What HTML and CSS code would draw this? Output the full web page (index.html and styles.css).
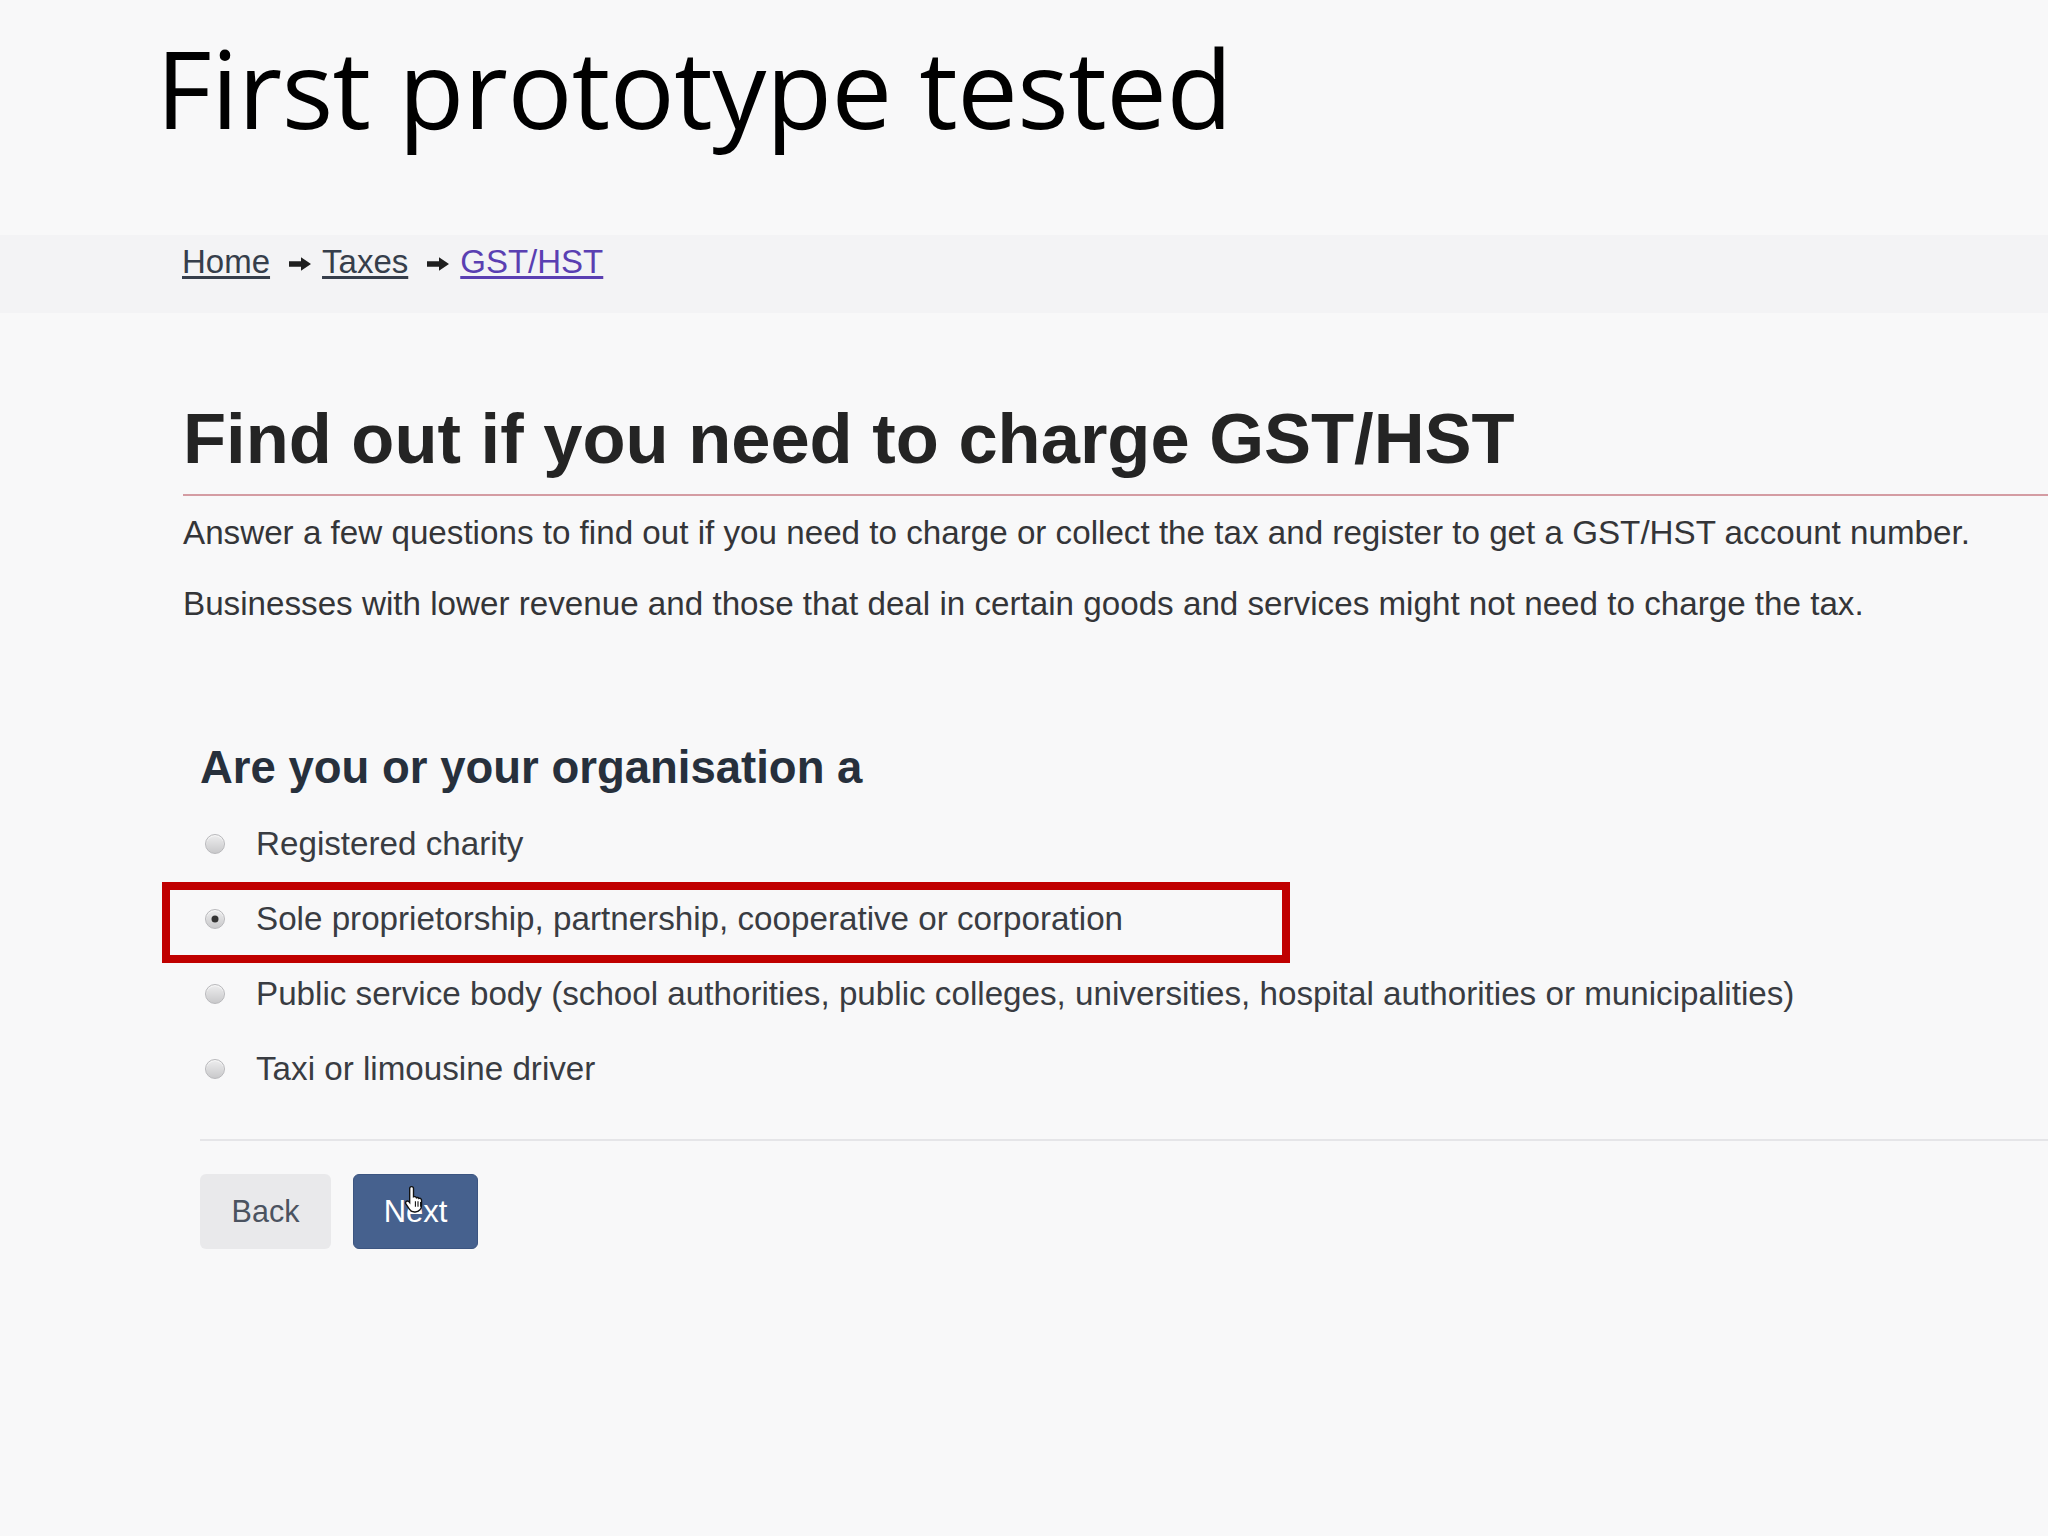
FILE: index.html
```html
<!DOCTYPE html>
<html lang="en">
<head>
<meta charset="utf-8">
<title>First prototype tested</title>
<link rel="stylesheet" href="styles.css">
</head>
<body>
<div class="slide">
  <h1 class="slide-title">First prototype tested</h1>

  <nav class="breadcrumb">
    <a class="crumb" href="#">Home</a>
    <span class="sep"><svg viewBox="0 0 24 16" width="24" height="16"><path d="M1 5.3h12V1.2l10 6.8-10 6.8V10.7H1z" fill="#1f1f1f"/></svg></span>
    <a class="crumb" href="#">Taxes</a>
    <span class="sep"><svg viewBox="0 0 24 16" width="24" height="16"><path d="M1 5.3h12V1.2l10 6.8-10 6.8V10.7H1z" fill="#1f1f1f"/></svg></span>
    <a class="crumb visited" href="#">GST/HST</a>
  </nav>

  <main class="content">
    <h2 class="page-title">Find out if you need to charge GST/HST</h2>
    <p class="lead">Answer a few questions to find out if you need to charge or collect the tax and register to get a GST/HST account number.</p>
    <p class="lead second">Businesses with lower revenue and those that deal in certain goods and services might not need to charge the tax.</p>

    <section class="question">
      <h3 class="q-title">Are you or your organisation a</h3>
      <div class="options">
        <label class="option"><span class="radio"></span><span class="opt-text">Registered charity</span></label>
        <label class="option selected"><span class="radio"></span><span class="opt-text">Sole proprietorship, partnership, cooperative or corporation</span><span class="highlight"></span></label>
        <label class="option"><span class="radio"></span><span class="opt-text">Public service body (school authorities, public colleges, universities, hospital authorities or municipalities)</span></label>
        <label class="option"><span class="radio"></span><span class="opt-text">Taxi or limousine driver</span></label>
      </div>
      <div class="actions">
        <button class="btn btn-back" type="button">Back</button>
        <button class="btn btn-next" type="button">Next<svg class="cursor" viewBox="0 0 16 22" width="22" height="30"><path d="M5.5 1.2c.8 0 1.4.6 1.4 1.4v6.1l.3-.1c.6-.3 1.4 0 1.7.6l.1.2c.5-.4 1.3-.3 1.7.3l.1.2c.5-.3 1.2-.2 1.6.3.3.3.4.7.4 1.1V15c0 2.6-2 4.8-4.6 4.8H7.6c-1.5 0-2.8-.7-3.600-1.9L1.3 13.8c-.4-.6-.2-1.4.4-1.8.6-.4 1.3-.3 1.8.2l.6.7V2.6c0-.8.6-1.4 1.4-1.4z" fill="#fff" stroke="#111" stroke-width="1"/><path d="M8.3 12v4M10.2 12v4M12.1 12.4v3.6" stroke="#111" stroke-width=".8"/></svg></button>
      </div>
    </section>
  </main>
</div>
</body>
</html>
```

FILE: styles.css
```css
html, body {
  margin: 0;
  padding: 0;
}

body {
  width: 2048px;
  height: 1536px;
  overflow: hidden;
  background: #f8f8f9;
  font-family: "Liberation Sans", Arial, Helvetica, sans-serif;
  color: #36373a;
}

.slide {
  width: 2048px;
  height: 1536px;
  overflow: hidden;
}

.slide-title {
  margin: 0;
  padding: 34px 0 0 156px;
  font-family: "Open Sans", "Noto Sans", sans-serif;
  font-weight: 400;
  font-size: 108px;
  line-height: 108px;
  letter-spacing: -0.5px;
  color: #000;
}

.breadcrumb {
  margin-top: 93px;
  height: 78px;
  box-sizing: border-box;
  padding: 7px 0 0 182px;
  background: #f3f3f5;
  font-size: 33px;
  line-height: 40px;
  display: flex;
  align-items: flex-start;
}

.crumb {
  color: #363e4b;
  text-decoration: underline;
  text-decoration-thickness: 3px;
  text-underline-offset: 3px;
}

.crumb.visited {
  color: #5a3fb2;
}

.sep {
  display: inline-flex;
  align-items: center;
  height: 40px;
  margin: 2px 10px 0 18px;
}

.content {
  padding-left: 183px;
}

.page-title {
  margin: 84px 0 0;
  padding: 0 0 13px 0;
  font-size: 70.5px;
  line-height: 84px;
  font-weight: 700;
  color: #242424;
  border-bottom: 2px solid #d49ca3;
}

.lead {
  margin: 17px 0 0;
  font-size: 33.2px;
  line-height: 40px;
  color: #343538;
}

.lead.second {
  margin-top: 31px;
}

.question {
  margin-left: 17px;
}

.q-title {
  margin: 117px 0 0;
  font-size: 45.5px;
  line-height: 54px;
  font-weight: 700;
  color: #27303c;
}

.options {
  margin-top: 11px;
}

.option {
  position: relative;
  display: flex;
  align-items: center;
  height: 75px;
  font-size: 33.2px;
  color: #393c42;
}

.radio {
  position: relative;
  flex: none;
  width: 20px;
  height: 20px;
  margin-left: 5px;
  box-sizing: border-box;
  border-radius: 50%;
  border: 1px solid #b9b9bc;
  background: linear-gradient(#ededee, #c9c9cb);
  box-shadow: inset 0 1px 1px rgba(255, 255, 255, 0.7);
}

.option.selected .radio::after {
  content: "";
  position: absolute;
  left: 50%;
  top: 50%;
  width: 7px;
  height: 7px;
  border-radius: 50%;
  background: #333;
  transform: translate(-50%, -50%);
}

.opt-text {
  margin-left: 31px;
}

.highlight {
  position: absolute;
  left: -38px;
  top: 1px;
  width: 1128px;
  height: 81px;
  box-sizing: border-box;
  border: 8px solid #c00000;
  pointer-events: none;
}

.actions {
  margin-top: 33px;
  padding-top: 33px;
  border-top: 2px solid #e5e5e8;
  display: flex;
  gap: 22px;
}

.btn {
  position: relative;
  height: 75px;
  padding: 0 31px;
  border: none;
  border-radius: 6px;
  font-family: "Liberation Sans", Arial, sans-serif;
  font-size: 30.5px;
}

.btn-back {
  width: 131px;
  background: #e9e9eb;
  color: #4b5360;
}

.btn-next {
  width: 125px;
  padding: 0;
  background: #46618e;
  border: 1px solid #3c5581;
  color: #fff;
  font-size: 31px;
}

.cursor {
  position: absolute;
  left: 50px;
  top: 10px;
}
```
